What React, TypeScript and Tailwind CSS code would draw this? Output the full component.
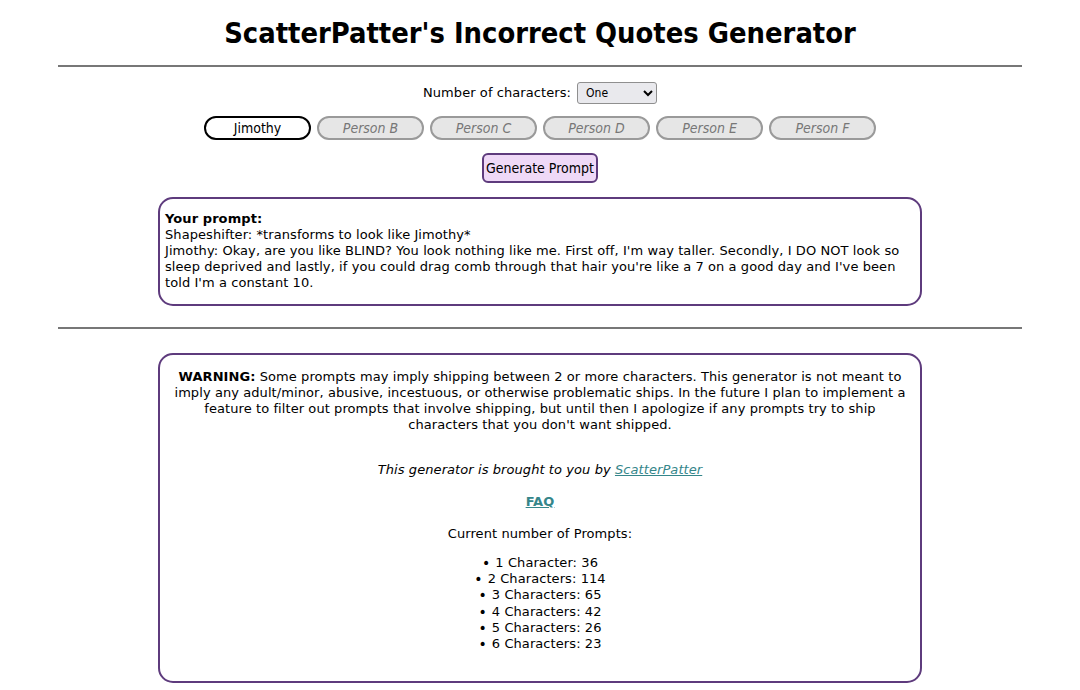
import React, { useState } from 'react';

const names = ['Jimothy', 'Person B', 'Person C', 'Person D', 'Person E', 'Person F'];

const counts = [
  ['1 Character', 36],
  ['2 Characters', 114],
  ['3 Characters', 65],
  ['4 Characters', 42],
  ['5 Characters', 26],
  ['6 Characters', 23],
] as const;

const App: React.FC = () => {
  const [count, setCount] = useState('One');

  return (
    <div className="min-h-screen bg-white text-black font-['DejaVu_Sans',Verdana,sans-serif] text-[13px] leading-4 tracking-[0.08px]">
      {/* Title */}
      <h1 className="pt-[16px] pb-[15px] text-center text-[28.8px] leading-[34px] font-bold tracking-normal font-['DejaVu_Sans_Condensed','DejaVu_Sans',sans-serif]">
        ScatterPatter's Incorrect Quotes Generator
      </h1>
      <hr className="mx-[58px] border-t-2 border-[#777]" />

      {/* Controls */}
      <div className="mt-[15px] flex items-center justify-center gap-[6px]">
        <span>Number of characters:</span>
        <select
          value={count}
          onChange={(e) => setCount(e.target.value)}
          className="h-[22px] w-[80px] rounded-[3px] border border-[#8f8f8f] bg-[#e9e9ed] pl-[4px] text-[12px] tracking-normal font-['DejaVu_Sans_Condensed',sans-serif]"
        >
          <option>One</option>
          <option>Two</option>
          <option>Three</option>
          <option>Four</option>
          <option>Five</option>
          <option>Six</option>
        </select>
      </div>

      <div className="mt-[12px] flex justify-center gap-[6px] font-['DejaVu_Sans_Condensed',sans-serif] text-[14px] tracking-normal">
        {names.map((n, i) => (
          <div
            key={n}
            className={
              i === 0
                ? 'flex h-[24px] w-[107px] items-center justify-center rounded-full border-2 border-black bg-white'
                : 'flex h-[24px] w-[107px] items-center justify-center rounded-full border-2 border-[#9a9a9a] bg-[#e6e6e6] italic text-[#777]'
            }
          >
            {n}
          </div>
        ))}
      </div>

      <div className="mt-[13px] flex justify-center">
        <button className="h-[30px] w-[116px] rounded-[6px] border-2 border-[#5e3b7d] bg-[#efd9f7] font-['DejaVu_Sans_Condensed',sans-serif] text-[14px] tracking-normal">
          Generate Prompt
        </button>
      </div>

      {/* Prompt output */}
      <div className="mx-auto mt-[14px] w-[764px] rounded-[15px] border-2 border-[#5e3b7d] px-[5px] pt-[12px] pb-[13px]">
        <p className="font-bold">Your prompt:</p>
        <p>Shapeshifter: *transforms to look like Jimothy*</p>
        <p>
          Jimothy: Okay, are you like BLIND? You look nothing like me. First off, I'm way taller. Secondly, I DO NOT look so
          sleep deprived and lastly, if you could drag comb through that hair you're like a 7 on a good day and I've been
          told I'm a constant 10.
        </p>
      </div>

      <hr className="mx-[58px] mt-[21px] border-t-2 border-[#777]" />

      {/* Info */}
      <div className="mx-auto mt-[24px] w-[764px] rounded-[15px] border-2 border-[#5e3b7d] px-[12px] pt-[14px] pb-[29px] text-center">
        <p>
          <b>WARNING:</b> Some prompts may imply shipping between 2 or more characters. This generator is not meant to
          imply any adult/minor, abusive, incestuous, or otherwise problematic ships. In the future I plan to implement a
          feature to filter out prompts that involve shipping, but until then I apologize if any prompts try to ship
          characters that you don't want shipped.
        </p>
        <p className="mt-[29px] italic">
          This generator is brought to you by{' '}
          <a href="#" className="text-[#35868a] underline">
            ScatterPatter
          </a>
        </p>
        <p className="mt-[16px]">
          <a href="#" className="font-bold text-[#35868a] underline">
            FAQ
          </a>
        </p>
        <p className="mt-[16px]">Current number of Prompts:</p>
        <ul className="mt-[13px] leading-[16.2px]">
          {counts.map(([label, n]) => (
            <li key={label}>
              <span className="mr-[5px] align-top text-[14px] leading-[16.2px]">•</span>
              {label}: {n}
            </li>
          ))}
        </ul>
      </div>
    </div>
  );
};

export default App;
